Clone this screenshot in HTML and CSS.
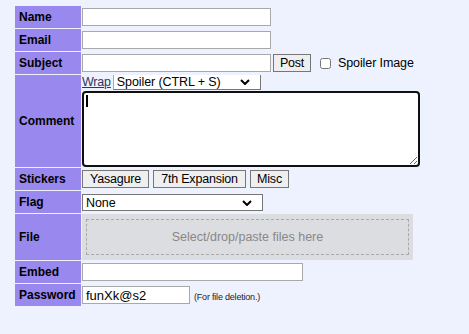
FILE: index.html
```html
<!DOCTYPE html>
<html>
<head>
<meta charset="UTF-8" />
<title>Post form</title>
<link rel="stylesheet" href="styles.css">
</head>
<body>

<!-- post form -->
<form class="post-form">
<table>
	<tr>
		<th>Name</th>
		<td><input type="text" class="field" /></td>
	</tr>
	<tr>
		<th>Email</th>
		<td><input type="text" class="field" /></td>
	</tr>
	<tr>
		<th>Subject</th>
		<td>
			<div class="subject-line">
				<input type="text" class="field" />
				<button type="button" class="btn btn-post">Post</button>
				<label class="spoiler"><input type="checkbox" />Spoiler Image</label>
			</div>
		</td>
	</tr>
	<tr>
		<th>Comment</th>
		<td>
			<div class="format-bar">
				<a href="#">Wrap</a>
				<div class="select select-spoiler">Spoiler (CTRL + S)<svg viewBox="0 0 10 6"><path d="M1 1l4 4 4-4" /></svg></div>
			</div>
			<div class="comment-box">
				<textarea></textarea>
			</div>
		</td>
	</tr>
	<tr>
		<th>Stickers</th>
		<td>
			<div class="stickers">
				<button type="button" class="btn">Yasagure</button>
				<button type="button" class="btn">7th Expansion</button>
				<button type="button" class="btn">Misc</button>
			</div>
		</td>
	</tr>
	<tr>
		<th>Flag</th>
		<td><div class="select select-flag">None<svg viewBox="0 0 10 6"><path d="M1 1l4 4 4-4" /></svg></div></td>
	</tr>
	<tr>
		<th>File</th>
		<td>
			<div class="file-box">
				<div class="dropzone">Select/drop/paste files here</div>
			</div>
		</td>
	</tr>
	<tr>
		<th>Embed</th>
		<td><input type="text" class="field field-embed" /></td>
	</tr>
	<tr>
		<th>Password</th>
		<td>
			<div class="pass-line">
				<input type="text" class="field field-pass" value="funXk@s2" />
				<span class="unimportant">(For file deletion.)</span>
			</div>
		</td>
	</tr>
</table>
</form>
<!-- /post form -->

</body>
</html>
```

FILE: styles.css
```css
/* -------------------------------------
		GLOBAL
------------------------------------- */
body {
	margin: 0;
	background: #eef2ff;
	color: #000;
	font-family: "Liberation Sans", Arial, sans-serif;
	font-size: 13px;
}

a {
	color: #34345c;
}

/* -------------------------------------
		FORM TABLE
------------------------------------- */
.post-form table {
	margin: 5px 0 0 14px;
	border-spacing: 1px;
}

.post-form th {
	background: #9988ee;
	width: 57px;
	height: 22px;
	padding: 0 5px 0 4px;
	text-align: left;
	font-size: 12px;
	font-weight: bold;
	white-space: nowrap;
}

.post-form td {
	padding: 0;
	vertical-align: middle;
	white-space: nowrap;
}

/* -------------------------------------
		ELEMENTS
------------------------------------- */
.field {
	box-sizing: border-box;
	width: 189px;
	height: 18px;
	margin: 0;
	padding: 0 3px;
	border: 1px solid #a9a9a9;
	background: #fff;
	font-family: "Liberation Sans", Arial, sans-serif;
	font-size: 13px;
	vertical-align: middle;
}

.field-embed {
	width: 221px;
}

.field-pass {
	width: 108px;
}

.btn {
	box-sizing: border-box;
	height: 18px;
	margin: 0;
	padding: 0;
	border: 1px solid #767676;
	background: #efefef;
	color: #000;
	font-family: "Liberation Sans", Arial, sans-serif;
	font-size: 12.5px;
	line-height: 16px;
	letter-spacing: -0.2px;
}

.subject-line,
.stickers,
.pass-line {
	display: flex;
	align-items: center;
}

.subject-line .btn-post {
	width: 38px;
	margin-left: 2px;
}

.spoiler {
	display: flex;
	align-items: center;
	margin-left: 9px;
	font-size: 12.5px;
	letter-spacing: -0.1px;
}

.spoiler input {
	width: 11px;
	height: 11px;
	margin: 0 7px 0 0;
}

.stickers {
	gap: 4px;
}

.stickers .btn:nth-child(1) {
	width: 67px;
}

.stickers .btn:nth-child(2) {
	width: 93px;
}

.stickers .btn:nth-child(3) {
	width: 39px;
}

.select {
	box-sizing: border-box;
	display: inline-flex;
	align-items: center;
	justify-content: space-between;
	height: 17px;
	padding: 0 10px 0 3px;
	border: 1px solid #767676;
	background: #fff;
	font-size: 12.5px;
	letter-spacing: -0.1px;
}

.select svg {
	width: 10px;
	height: 6px;
	fill: none;
	stroke: #000;
	stroke-width: 2;
}

.select-spoiler {
	width: 148px;
	height: 15px;
	border-top: 0;
	border-left-color: #a9a9a9;
	padding-left: 3px;
}

.select-flag {
	width: 181px;
	margin-top: 1px;
}

/* -------------------------------------
		COMMENT
------------------------------------- */
.format-bar {
	display: flex;
	align-items: center;
	gap: 2px;
	height: 15px;
	line-height: 15px;
}

.format-bar a {
	font-size: 12.5px;
	letter-spacing: -0.2px;
}

.comment-box {
	position: relative;
	width: 338px;
	margin-top: 1px;
}

.comment-box textarea {
	display: block;
	box-sizing: border-box;
	width: 338px;
	height: 76px;
	margin: 0;
	border: 2px solid #101010;
	border-radius: 4px;
	background: #fff;
	resize: vertical;
}

/* the caret of the focused box */
.comment-box::after {
	content: "";
	position: absolute;
	left: 4px;
	top: 4px;
	width: 2px;
	height: 12px;
	background: #000;
}

/* -------------------------------------
		FILE
------------------------------------- */
.file-box {
	width: 331px;
	padding: 5px 4px 5px 4px;
	box-sizing: border-box;
	background: #dcdde1;
}

.dropzone {
	height: 34px;
	border: 1px dashed #a8a8a8;
	color: #888;
	font-size: 12.5px;
	line-height: 34px;
	text-align: center;
}

.unimportant {
	margin-left: 4px;
	padding-top: 3px;
	font-size: 9px;
	letter-spacing: -0.2px;
	color: #222;
}
```
